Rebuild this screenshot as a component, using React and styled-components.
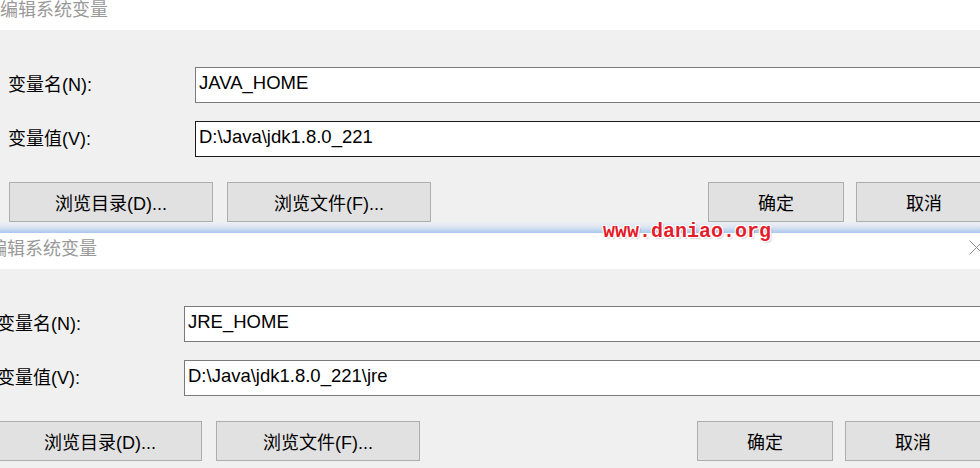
import React from 'react';
import styled, { createGlobalStyle } from 'styled-components';

const GlobalStyle = createGlobalStyle`
  html, body {
    margin: 0;
    padding: 0;
    background: #f0f0f0;
    overflow: hidden;
  }
  body {
    font-family: "Liberation Sans", "Noto Sans CJK SC", sans-serif;
    color: #000;
  }
`;

const Page = styled.div`
  position: relative;
  width: 980px;
  height: 468px;
  overflow: hidden;
`;

// each screenshot is cropped by its frame
const Frame = styled.div`
  height: ${props => props.height}px;
  overflow: hidden;
`;

const Window = styled.div`
  width: 1004px;
  margin-top: ${props => props.offsetTop || 0}px;
  margin-left: ${props => props.offsetLeft || 0}px;
  display: flex;
  flex-direction: column;
`;

const TitleBar = styled.div`
  height: 36px;
  background: #fff;
  display: flex;
  align-items: flex-start;
  justify-content: space-between;
  padding: 5px 9px 0 0;
  box-sizing: border-box;
`;

const Title = styled.span`
  font-family: "Noto Sans CJK SC", sans-serif;
  font-size: 18px;
  line-height: 18px;
  color: #999;
`;

const CloseIcon = styled.svg`
  width: 15px;
  height: 15px;
  margin-top: 2px;
`;

const Body = styled.div`
  background: #f0f0f0;
  padding: 37px 12px 20px 8px;
  display: flex;
  flex-direction: column;
`;

const Field = styled.div`
  display: grid;
  grid-template-columns: 187px 1fr;
  align-items: center;
  margin-bottom: 18px;
`;

const Label = styled.label`
  font-size: 18px;
  line-height: 22px;
`;

const Input = styled.div`
  height: 36px;
  box-sizing: border-box;
  background: #fff;
  border: 1px solid ${props => (props.dark ? '#1a1a1a' : '#7a7a7a')};
  padding: 4px 0 0 3px;
  font-size: 18.5px;
  line-height: 22px;
  white-space: nowrap;
`;

const ButtonRow = styled.div`
  display: flex;
  align-items: center;
  margin-top: 7px;
  padding-left: 1px;
`;

const Spacer = styled.div`
  flex: 1;
`;

const Button = styled.div`
  width: ${props => props.width}px;
  height: 40px;
  box-sizing: border-box;
  background: #e1e1e1;
  border: 1px solid #adadad;
  display: flex;
  align-items: center;
  justify-content: center;
  font-size: 18px;
  margin-right: ${props => props.gap || 0}px;
`;

const Seam = styled.div`
  height: 11px;
  background: linear-gradient(#f0f0f0 0%, #dde6f2 45%, #a9c7ee 100%);
`;

const Watermark = styled.div`
  position: absolute;
  left: 603px;
  top: 221px;
  font-family: "Liberation Mono", monospace;
  font-weight: bold;
  font-size: 20px;
  line-height: 22px;
  color: #e51c2a;
  text-shadow:
    1px 0 0 #fff, -1px 0 0 #fff, 0 1px 0 #fff, 0 -1px 0 #fff,
    1px 1px 0 #fff, -1px -1px 0 #fff, 1px -1px 0 #fff, -1px 1px 0 #fff,
    2px 2px 1px rgba(0, 0, 0, 0.15);
`;

function EditDialog({ name, value, darkValue, offsetTop, offsetLeft }) {
  return (
    <Window offsetTop={offsetTop} offsetLeft={offsetLeft}>
      <TitleBar>
        <Title>编辑系统变量</Title>
        <CloseIcon viewBox="0 0 15 15">
          <path d="M0.5 0.5 L14.5 14.5 M14.5 0.5 L0.5 14.5" stroke="#8a8a8a" strokeWidth="1" fill="none" />
        </CloseIcon>
      </TitleBar>
      <Body>
        <Field>
          <Label>变量名(N):</Label>
          <Input>{name}</Input>
        </Field>
        <Field>
          <Label>变量值(V):</Label>
          <Input dark={darkValue}>{value}</Input>
        </Field>
        <ButtonRow>
          <Button width={204} gap={14}>浏览目录(D)...</Button>
          <Button width={204}>浏览文件(F)...</Button>
          <Spacer />
          <Button width={136} gap={12}>确定</Button>
          <Button width={136}>取消</Button>
        </ButtonRow>
      </Body>
    </Window>
  );
}

export default function App() {
  return (
    <Page>
      <GlobalStyle />
      <Frame height={222}>
        <EditDialog
          name="JAVA_HOME"
          value="D:\Java\jdk1.8.0_221"
          darkValue
          offsetTop={-6}
        />
      </Frame>
      <Seam />
      <Frame height={235}>
        <EditDialog
          name="JRE_HOME"
          value="D:\Java\jdk1.8.0_221\jre"
          offsetLeft={-11}
        />
      </Frame>
      <Watermark>www.daniao.org</Watermark>
    </Page>
  );
}
